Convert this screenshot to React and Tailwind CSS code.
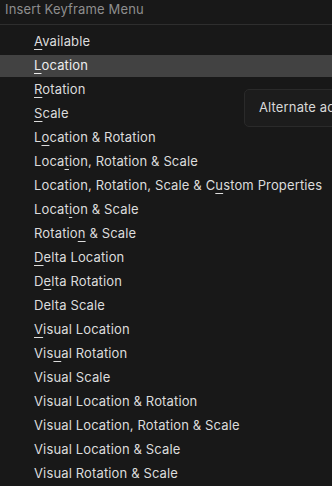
import React from "react";

const items = [
  ["Available", 0],
  ["Location", 0],
  ["Rotation", 0],
  ["Scale", 0],
  ["Location & Rotation", 1],
  ["Location, Rotation & Scale", 4],
  ["Location, Rotation, Scale & Custom Properties", 29],
  ["Location & Scale", 5],
  ["Rotation & Scale", 7],
  ["Delta Location", 0],
  ["Delta Rotation", 1],
  ["Delta Scale", -1],
  ["Visual Location", 0],
  ["Visual Rotation", 3],
  ["Visual Scale", -1],
  ["Visual Location & Rotation", -1],
  ["Visual Location, Rotation & Scale", -1],
  ["Visual Location & Scale", -1],
  ["Visual Rotation & Scale", -1],
];

const Label = ({ text, at }) => {
  if (at < 0) return <span>{text}</span>;
  return (
    <span>
      {text.slice(0, at)}
      <span className="underline underline-offset-[3px] decoration-1">{text[at]}</span>
      {text.slice(at + 1)}
    </span>
  );
};

export default function App() {
  return (
    <div
      className="relative w-[332px] h-[486px] overflow-hidden bg-[#181818] text-[13px] tracking-[0.14px] text-[#dcdcdc]"
      style={{ fontFamily: "Inter, 'Noto Sans', sans-serif" }}
    >
      {/* Header */}
      <div className="h-[25px] border-b border-[#2e2e2e] pl-[5px] pt-px leading-[17px] text-[#8e8e8e]">
        Insert Keyframe Menu
      </div>

      {/* Items */}
      <div className="pt-[4px]">
        {items.map(([text, at], i) => (
          <div key={text} className="h-6 pt-[2px]">
            <div
              className={`h-[22px] flex items-center pl-[34px] ${
                i === 1 ? "bg-[#424242] text-[#ececec]" : ""
              }`}
            >
              <Label text={text} at={at} />
            </div>
          </div>
        ))}
      </div>

      {/* Tooltip */}
      <div className="absolute left-[244px] top-[89px] h-[38px] w-[160px] flex items-center pl-[14px] rounded-[5px] border border-[#2a2a2a] bg-[#1c1c1c] text-[#d8d8d8] whitespace-nowrap">
        Alternate actions
      </div>
    </div>
  );
}
